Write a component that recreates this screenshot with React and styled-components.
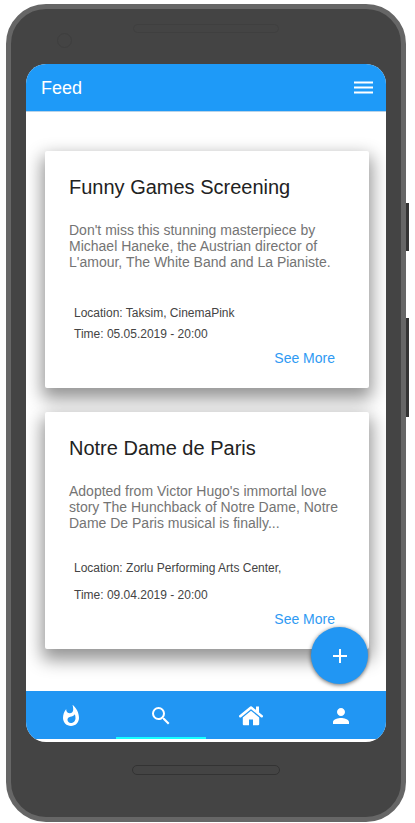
import React from "react";
import styled, { createGlobalStyle } from "styled-components";
import { MdWhatshot, MdSearch, MdPerson, MdAdd } from "react-icons/md";

const GlobalStyle = createGlobalStyle`
  * { box-sizing: border-box; }
  body {
    margin: 0;
    background: #fff;
    font-family: "Liberation Sans", Arial, sans-serif;
  }
  h1, h2, p { margin: 0; font-weight: 400; }
  button { border: 0; padding: 0; background: none; font: inherit; cursor: pointer; }
`;

const Stage = styled.div`
  display: flex;
  align-items: stretch;
  min-height: 100vh;
  padding: 4px 6px 1px;
`;

const Phone = styled.div`
  flex: 1;
  display: flex;
  flex-direction: column;
  padding: 0 15px;
  border: 5px solid #666;
  border-radius: 40px;
  background: #444;
`;

const SideKeys = styled.div`
  width: 3px;
  display: flex;
  flex-direction: column;
  gap: 67px;
  padding-top: 199px;
`;

const SideKey = styled.span`
  height: ${(p) => p.$length}px;
  background: #333;
`;

const TopBezel = styled.div`
  height: 55px;
  display: grid;
  grid-template-columns: 1fr 146px 1fr;
  align-items: start;
  padding-top: 15px;
`;

const Camera = styled.span`
  width: 15px;
  height: 15px;
  margin: 9px 0 0 31px;
  border: 1px solid #3e3e3e;
  border-radius: 50%;
`;

const Speaker = styled.span`
  height: 9px;
  border: 1px solid #3f3f3f;
  border-radius: 5px;
`;

const BottomBezel = styled.div`
  height: 75px;
  display: flex;
  justify-content: center;
  padding-top: 23px;
`;

const HomeKey = styled.span`
  width: 148px;
  height: 10px;
  border: 1px solid #333;
  border-radius: 5px;
`;

const Screen = styled.div`
  flex: 1;
  position: relative;
  display: flex;
  flex-direction: column;
  padding-bottom: 3px;
  border-radius: 20px;
  background: #fff;
  overflow: hidden;
`;

const AppBar = styled.header`
  height: 48px;
  display: flex;
  align-items: center;
  justify-content: space-between;
  padding: 0 13px 0 15px;
  border-bottom: 1px solid #b9d3e8;
  background: #1e9af8;
  color: #fff;
`;

const AppTitle = styled.h1`
  font-size: 18px;
  line-height: 24px;
`;

const IconButton = styled.button`
  display: flex;
  color: #fff;
`;

const Feed = styled.main`
  flex: 1;
  display: flex;
  flex-direction: column;
  gap: 24px;
  padding: 39px 17px 0 19px;
`;

const Card = styled.article`
  height: 237px;
  display: flex;
  flex-direction: column;
  padding: 24px 24px 22px;
  border-radius: 2px;
  background: #fff;
  box-shadow: 0 8px 17px 3px rgba(0, 0, 0, 0.42);
`;

const CardTitle = styled.h2`
  color: #222;
  font-size: 20px;
  line-height: 24px;
`;

const Summary = styled.p`
  margin-top: 23px;
  color: #747474;
  font-size: 14px;
  line-height: 16px;
`;

const Details = styled.div`
  flex: 1;
  display: flex;
  flex-direction: column;
  justify-content: flex-end;
  gap: ${(p) => p.$gap}px;
  padding: 0 5px 8px;
  color: #444;
  font-size: 12px;
  line-height: 16px;
`;

const MoreLink = styled.a`
  align-self: flex-end;
  margin-right: 10px;
  color: #2f9af3;
  font-size: 14px;
  line-height: 16px;
  text-decoration: none;
`;

const AddButton = styled.button`
  position: absolute;
  right: 18px;
  bottom: 58px;
  width: 57px;
  height: 57px;
  display: flex;
  align-items: center;
  justify-content: center;
  border-radius: 50%;
  background: #2196f3;
  color: #fff;
  box-shadow: 0 1px 4px rgba(0, 0, 0, 0.6);
`;

const TabBar = styled.nav`
  height: 48px;
  position: relative;
  display: grid;
  grid-template-columns: repeat(4, 1fr);
  background: #2196f3;
`;

const Tab = styled.button`
  display: flex;
  align-items: center;
  justify-content: center;
  padding-top: 3px;
  border-bottom: 2px solid ${(p) => (p.$active ? "#18ffff" : "transparent")};
  color: #fff;
`;

const events = [
  {
    title: "Funny Games Screening",
    summary:
      "Don't miss this stunning masterpiece by Michael Haneke, the Austrian director of L'amour, The White Band and La Pianiste.",
    location: "Taksim, CinemaPink",
    time: "05.05.2019 - 20:00",
    gap: 5,
  },
  {
    title: "Notre Dame de Paris",
    summary:
      "Adopted from Victor Hugo's immortal love story The Hunchback of Notre Dame, Notre Dame De Paris musical is finally...",
    location: "Zorlu Performing Arts Center,",
    time: "09.04.2019 - 20:00",
    gap: 11,
  },
];

function MenuIcon() {
  return (
    <svg width="19" height="14" viewBox="0 0 19 14" fill="currentColor" aria-hidden="true">
      <path d="M0 .5h19v2H0zM0 5.5h19v2H0zM0 10.5h19v2H0z" />
    </svg>
  );
}

function HomeIcon({ size }) {
  return (
    <svg width={size} height={size} viewBox="0 0 24 24" aria-hidden="true">
      <path
        d="M1.3 12.2 12 3.5l10.7 8.7"
        fill="none"
        stroke="currentColor"
        strokeWidth="2.6"
        strokeLinecap="round"
        strokeLinejoin="round"
      />
      <path d="M17 2.6h3v7l-3-2.4z" fill="currentColor" />
      <path
        d="M12 6.8 3.8 13.4v6.9c0 .5.4.9.9.9H10v-5.7h4v5.7h5.3c.5 0 .9-.4.9-.9v-6.9z"
        fill="currentColor"
      />
    </svg>
  );
}

const tabs = [
  { label: "Trending", Icon: MdWhatshot },
  { label: "Search", Icon: MdSearch, active: true },
  { label: "Home", Icon: HomeIcon },
  { label: "Profile", Icon: MdPerson },
];

function EventCard({ event }) {
  return (
    <Card>
      <CardTitle>{event.title}</CardTitle>
      <Summary>{event.summary}</Summary>
      <Details $gap={event.gap}>
        <p>Location: {event.location}</p>
        <p>Time: {event.time}</p>
      </Details>
      <MoreLink href="#more">See More</MoreLink>
    </Card>
  );
}

export default function App() {
  return (
    <>
      <GlobalStyle />
      <Stage>
        <Phone>
          <TopBezel>
            <Camera />
            <Speaker />
          </TopBezel>
          <Screen>
            <AppBar>
              <AppTitle>Feed</AppTitle>
              <IconButton aria-label="Menu">
                <MenuIcon />
              </IconButton>
            </AppBar>
            <Feed>
              {events.map((event) => (
                <EventCard key={event.title} event={event} />
              ))}
            </Feed>
            <TabBar>
              {tabs.map(({ label, Icon, active }) => (
                <Tab key={label} aria-label={label} $active={active}>
                  <Icon size={24} />
                </Tab>
              ))}
            </TabBar>
            <AddButton aria-label="Add event">
              <MdAdd size={24} />
            </AddButton>
          </Screen>
          <BottomBezel>
            <HomeKey />
          </BottomBezel>
        </Phone>
        <SideKeys>
          <SideKey $length={48} />
          <SideKey $length={99} />
        </SideKeys>
      </Stage>
    </>
  );
}
